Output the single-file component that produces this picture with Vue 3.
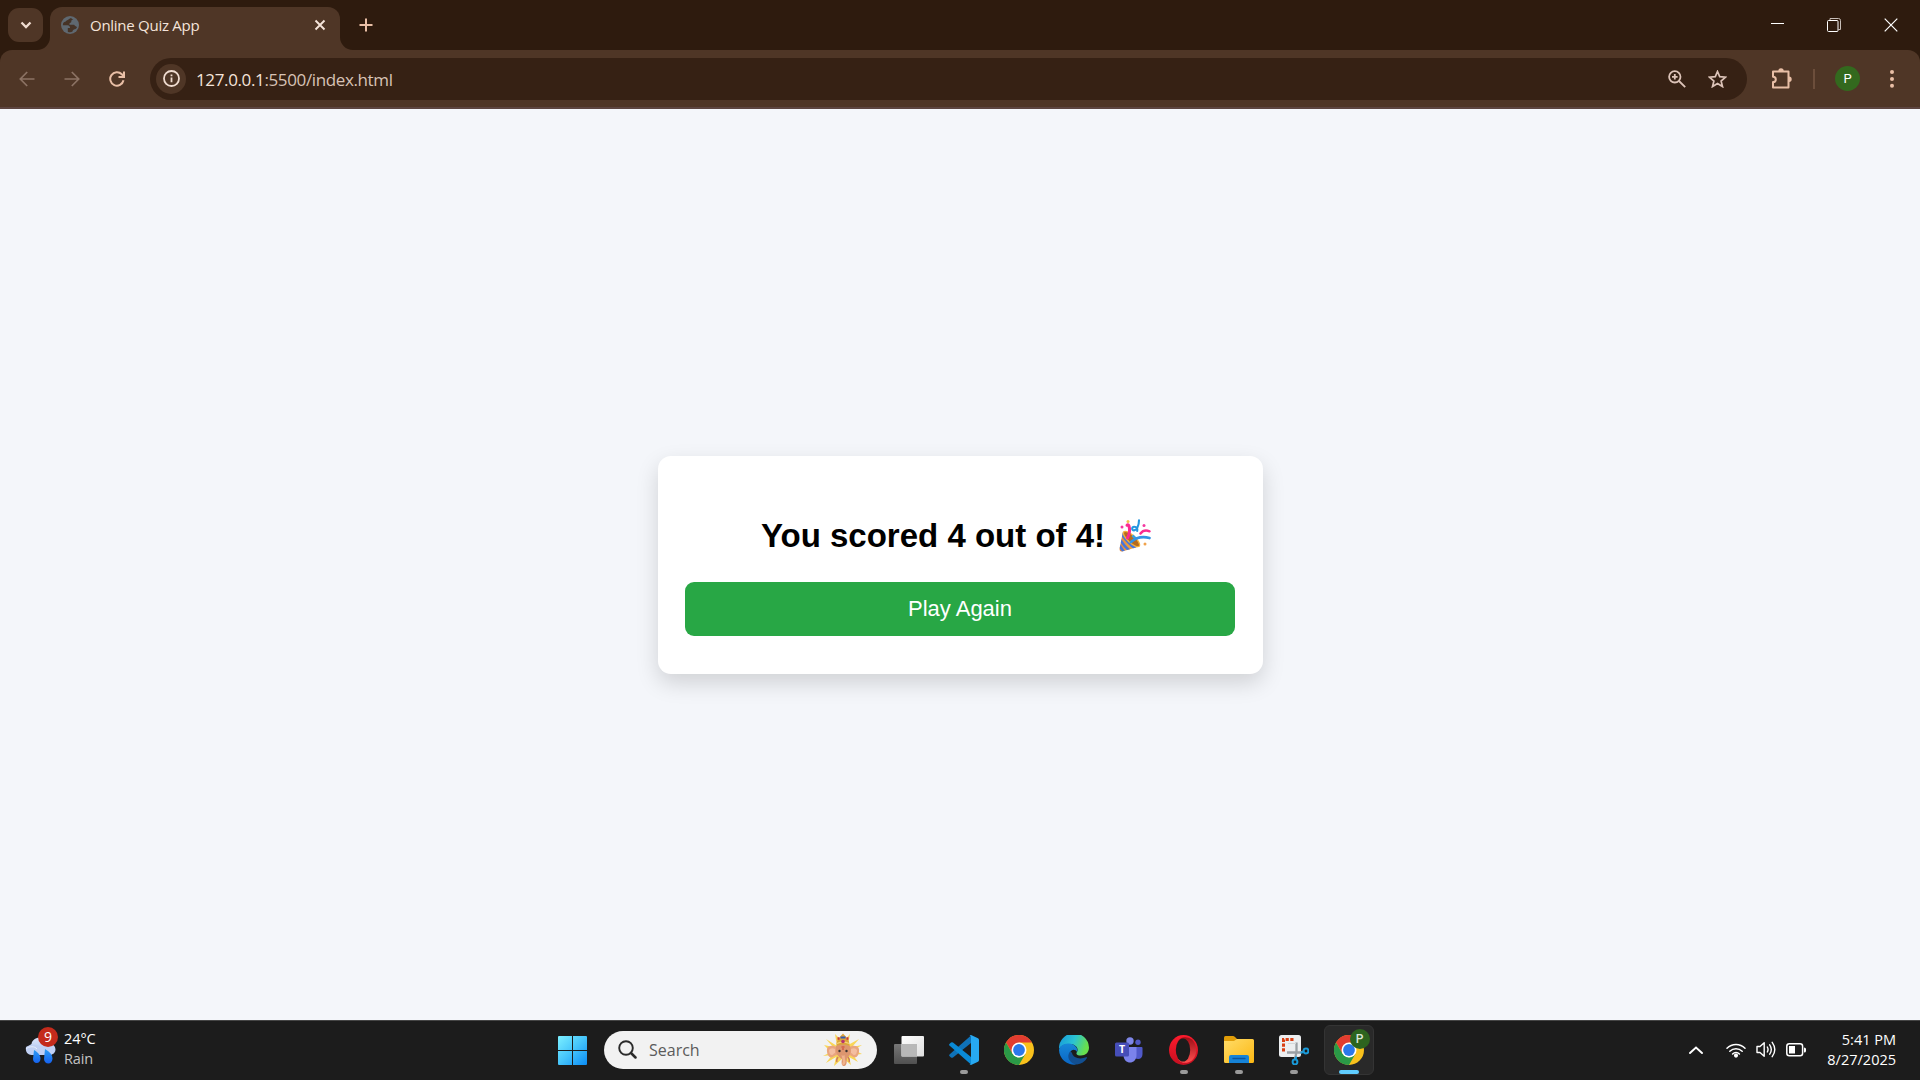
<script setup>
import { ref } from 'vue'

const score = ref(4)
const total = ref(4)
const playAgain = () => { score.value = total.value }
</script>

<template>
  <div class="screen">
    <header class="tabstrip">
      <button class="tab-search" aria-label="Search tabs">
        <svg width="12" height="8" viewBox="0 0 12 8"><path d="M1.500 1.500 6 6l4.500-4.500" fill="none" stroke="#f0dcd0" stroke-width="2.300" /></svg>
      </button>
      <div class="tab">
        <svg class="flare left" width="13" height="13" viewBox="0 0 13 13"><path d="M13 0v13H0A13 13 0 0 0 13 0Z" fill="#4f3626" /></svg>
        <svg class="favicon" width="18" height="18" viewBox="0 0 18 18">
          <circle cx="9" cy="9" r="9" fill="#5f6870" />
          <path d="M10 1.900c-1.800.3-2 1.600-3.300 2.100C5 4.400 4.800 6 3.300 6.100 2.300 6.400 1.800 8 1.900 9.200h4.600c2 0 2.500 1.500 2.500 2.700H6.800v3.800c1.300.7 3.600.8 4.700-.2.3-1.400 1-2 2.200-2.200 1.200-.1 1.900-1 2.300-2.300-1.300-.8-2.100-.8-2.900-2.200H9.300c-1.200 0-1.500-1.500-.2-1.900 1-.2 1.400-.9 1.200-1.800-.2-1 .8-1.300 1.900-1.200Z" fill="#463326" />
        </svg>
        <span class="tab-title">Online Quiz App</span>
        <svg class="tab-close" width="12" height="12" viewBox="0 0 12 12"><path d="m1.500 1.500 9 9m0-9-9 9" stroke="#f5e4da" stroke-width="1.900" /></svg>
        <svg class="flare right" width="13" height="13" viewBox="0 0 13 13"><path d="M0 0v13h13A13 13 0 0 1 0 0Z" fill="#4f3626" /></svg>
      </div>
      <svg class="new-tab" width="14" height="14" viewBox="0 0 14 14"><path d="M7 .5v13M.5 7h13" stroke="#e9bfa6" stroke-width="2" /></svg>
      <div class="window-controls">
        <svg width="13" height="13" viewBox="0 0 13 13"><path d="M0 5.500h13" stroke="#fff" /></svg>
        <svg width="14" height="14" viewBox="0 0 14 14" fill="none" stroke="#fff"><path d="M3 2.500V.5h8.500q2 0 2 2v9h-2" stroke="#c8bfb9" /><rect x=".5" y="2.500" width="10.500" height="11" rx="1" /></svg>
        <svg width="14" height="14" viewBox="0 0 14 14"><path d="m.7.7 12.600 12.600m0-12.600L.7 13.300" stroke="#fff" stroke-width="1.200" /></svg>
      </div>
    </header>

    <nav class="toolbar-wrap">
      <div class="toolbar">
        <div class="nav-icons">
          <svg width="16" height="16" viewBox="0 0 16 16" fill="none" stroke="#8c7364" stroke-width="1.700"><path d="M15.500 8H1.600M8.200 1 1.300 8l6.900 7" /></svg>
          <svg width="16" height="16" viewBox="0 0 16 16" fill="none" stroke="#8c7364" stroke-width="1.700"><path d="M.5 8h13.900M7.800 1l6.900 7-6.900 7" /></svg>
          <svg width="16" height="16" viewBox="0 0 16 16" fill="none" stroke="#e9bfa6" stroke-width="2"><path d="M14.500 9.300A6.700 6.700 0 1 1 12.800 3.300L15 5.600" /><path d="M15 .4v5.500H9.500" /></svg>
        </div>
        <div class="omnibox">
          <span class="site-info">
            <svg width="17" height="17" viewBox="0 0 17 17"><circle cx="8.500" cy="8.500" r="7.500" fill="none" stroke="#f0dcd0" stroke-width="1.800" /><path d="M8.500 7.600v4.700M8.500 4.400v1.900" stroke="#f0dcd0" stroke-width="1.800" /></svg>
          </span>
          <span class="url"><b>127.0.0.1</b>:5500/index.html</span>
          <svg class="magnify" width="18" height="18" viewBox="0 0 18 18" fill="none" stroke="#dcc3b8" stroke-width="1.800"><circle cx="6.800" cy="6.800" r="5.700" /><path d="m11 11 6.200 6.200M6.800 4v5.600M4 6.800h5.600" /></svg>
          <svg class="star" width="19" height="18" viewBox="0 0 19 18" fill="none" stroke="#dcc3b8" stroke-width="1.700"><path d="m9.500 1.500 2.200 5.200 5.800.5-4.400 3.800 1.400 5.600-5-3-5 3 1.400-5.600-4.400-3.800 5.800-.5Z" /></svg>
        </div>
        <svg class="puzzle" width="21" height="21" viewBox="0 0 21 21"><path d="M2 3.500h15.500V19.400H2v-5.300c2 0 2.800-1.200 2.800-2.700S4 8.700 2 8.700Z" fill="none" stroke="#e9bfa6" stroke-width="2" stroke-linejoin="round" /><path d="M7.300 3a2.700 2.700 0 0 1 5.400 0ZM18 8.500a2.700 2.700 0 0 1 0 5.400Z" fill="#e9bfa6" /></svg>
        <span class="divider"></span>
        <span class="avatar">P</span>
        <svg class="dots" width="4" height="18" viewBox="0 0 4 18" fill="#e9bfa6"><circle cx="2" cy="2" r="2" /><circle cx="2" cy="9" r="2" /><circle cx="2" cy="15.800" r="2" /></svg>
      </div>
    </nav>

    <main class="page">
      <section class="card">
        <h2 class="result">
          <span>You scored {{ score }} out of {{ total }}!</span>
          <svg class="popper" width="32" height="33" viewBox="0 0 32 33">
            <defs>
              <linearGradient id="cone" x1="0" x2="1"><stop stop-color="#e58a3c" /><stop offset="1" stop-color="#f2b53c" /></linearGradient>
              <clipPath id="coneClip"><path d="M4 12.500c5 2 13 8.500 16.500 15L3 32.500q-2.500.3-2.500-2.500Z" /></clipPath>
            </defs>
            <path d="M4 12.500c5 2 13 8.500 16.500 15L3 32.500q-2.500.3-2.500-2.500Z" fill="url(#cone)" />
            <g clip-path="url(#coneClip)" stroke="#4775dc" stroke-width="2.700" fill="none"><path d="M2 14c4 6 9 12 15 16M0 19c3 5 7 10 11 13M0 26l5 7" /></g>
            <ellipse cx="12.500" cy="20" rx="3.700" ry="10.500" transform="rotate(-47 12.500 20)" fill="#b56b1e" stroke="#f3b13a" stroke-width="1.300" />
            <path d="M13.500 16.500 17 20" stroke="#39a0dd" stroke-width="2.500" />
            <path d="M8.500 19c2-4 3-7 1.500-12-.5-1.500-1.700-1.500-2-.7" fill="none" stroke="#fb2b91" stroke-width="3" stroke-linecap="round" />
            <path d="M12 23c4-3.500 9-6.500 18.500-4" fill="none" stroke="#3292e5" stroke-width="2.700" stroke-linecap="round" />
            <path d="M21.500 14.500q3.500-4.500 9-2.200" fill="none" stroke="#fb2b91" stroke-width="2.500" stroke-linecap="round" />
            <path d="M20 1.200c0 5-2.200 10-5 10.200-2.600 0-2.300-3.700.2-3.700 2.600 0 3.600 1.600 3 4.200" fill="none" stroke="#2496e0" stroke-width="2.100" stroke-linecap="round" />
            <circle cx="3" cy="8" r="1.500" fill="#f338a0" /><circle cx="25" cy="6.500" r="1.500" fill="#f338a0" /><circle cx="9" cy="2.500" r="1.500" fill="#f0c34b" /><circle cx="26" cy="25" r="1.500" fill="#f0a24b" />
          </svg>
        </h2>
        <button class="play" @click="playAgain">Play Again</button>
      </section>
    </main>

    <footer class="taskbar">
      <div class="weather">
        <svg width="36" height="38" viewBox="0 0 36 38">
          <defs><linearGradient id="cloud" x2="0" y2="1"><stop stop-color="#dce6fb" /><stop offset="1" stop-color="#a9bfee" /></linearGradient><linearGradient id="drop" x2="0" y2="1"><stop stop-color="#2ea0f5" /><stop offset="1" stop-color="#1561f0" /></linearGradient></defs>
          <path d="M7 27a6 6 0 0 1-.5-11C7 12 11 9.500 15 9.500c5 0 8 2 9 6 4 0 6.500 3 6.500 6S28 27 24 27Z" fill="url(#cloud)" />
          <path d="M1 19c5-3 12-3 17 1 4-3 9-3 12 0 0 4-2 7-6 7H7c-4 0-7-3-6-8Z" fill="#c0d0f4" />
          <path d="M9 22c5 3 6.500 6 6.500 8.500S14 35 11.700 35 8 33 8 31ZM20 21c5 3 7.500 6 7.500 9.500 0 3-1.900 5-4.200 5s-4.300-1.800-4.300-4.500Z" fill="url(#drop)" />
          <path d="M1 21c3-3 9-3 11 0" fill="none" stroke="#e6edfc" />
        </svg>
        <span class="badge">9</span>
        <div class="two-line"><span>24°C</span><span class="muted">Rain</span></div>
      </div>

      <div class="apps">
        <svg class="start" width="29" height="29" viewBox="0 0 29 29"><defs><linearGradient id="win" x2="1" y2="1"><stop stop-color="#7cf0ff" /><stop offset=".5" stop-color="#45c4fb" /><stop offset="1" stop-color="#0b8cf5" /></linearGradient></defs><path d="M1 0h13v14H0V1q0-1 1-1Zm14 0h13q1 0 1 1v13H15ZM0 15h14v14H1q-1 0-1-1Zm15 0h14v13q0 1-1 1H15Z" fill="url(#win)" /></svg>
        <div class="search">
          <svg class="glass" width="19" height="19" viewBox="0 0 19 19" fill="none" stroke="#2b2b2b"><circle cx="8" cy="8" r="6.800" stroke-width="1.900" /><path d="m13 13 4.500 4.500" stroke-width="2.500" stroke-linecap="round" /></svg>
          <span class="search-text">Search</span>
          <svg class="ganesha" width="40" height="34" viewBox="0 0 40 34">
            <path d="m1 12 9 2-7-8 11 7L12 1l8 8 7-8-2 11 11-6-7 8 10-2-8 5 8 4-9 1 5 7-9-5 2 8-7-6h-2l-8 7 2-9-10 6 6-8-9 1 8-4Z" fill="#f9d658" />
            <path d="M14 14.500C10 11.500 5 13 4 16c-.5 3.500 1 8.500 4.500 8.500 2 0 3-2.500 5.500-2.500ZM26 14.500c4-3 9-1.500 10 1.500.5 3.500-1 8.500-4.500 8.500-2 0-3-2.500-5.500-2.500Z" fill="#e9a57f" />
            <path d="M12 16q-4-2-6 1c0 3 1 5 3 5 1 0 2-2 3-2ZM28 16q4-2 6 1c0 3-1 5-3 5-1 0-2-2-3-2Z" fill="#f4bea0" />
            <path d="M13 13c4-3 10-3 14 0 1.500 6 0 9.500-3 12-.5 2 .5 7-2.500 8-2.500.5-3.500-2-2.500-7-4-2-7-6-6-13Z" fill="#dd966f" />
            <path d="M18.500 22q1.500 1.500 3 0l1 7q-.5 4-3.500 2.500l1-3Z" fill="#f0b38d" />
            <path d="M15 24q-2 3-1 5M25 24q2 3 1 5" stroke="#cf8059" fill="none" stroke-width="1.500" />
            <path d="M13.500 13C13 7 17 4 20 .500c3 3.500 7 6.500 6.500 12.500-4-2-9-2-13 0Z" fill="#dba43a" />
            <path d="M14.500 5.500h2m7 0h2" stroke="#c8353b" stroke-width="2.500" /><path d="M17.500 4.500h5" stroke="#3158b4" stroke-width="2" /><path d="M14 10.500q6-3 12 0" fill="none" stroke="#f4d376" stroke-width="1.300" />
            <circle cx="20" cy="8.500" r="1.800" fill="#b8336f" /><path d="M18.500 14h3M19 16h2" stroke="#cf3f33" />
            <circle cx="16.500" cy="18" r="1.200" fill="#3d3431" /><circle cx="23.500" cy="18" r="1.200" fill="#3d3431" />
          </svg>
        </div>

        <div class="slot">
          <svg width="30" height="28" viewBox="0 0 30 28"><defs><linearGradient id="tv" x2="1" y2="1"><stop stop-color="#fff" /><stop offset="1" stop-color="#dedede" /></linearGradient><linearGradient id="tvb" x2="0" y2="1"><stop stop-color="#777" /><stop offset="1" stop-color="#505050" /></linearGradient></defs><rect y="8" width="23" height="20" rx="1" fill="url(#tvb)" /><rect x="7.500" width="22.500" height="20.500" rx="1" fill="url(#tv)" /><path d="M7.500 8H23v12.500H7.500Z" fill="#b8b8b8" /></svg>
        </div>
        <div class="slot">
          <svg width="30" height="30" viewBox="0 0 30 30"><path d="M1 19 22 .5V8L4 22.500q-1 .7-2 0L.4 21q-.8-1 .6-2Z" fill="#0f72b8" /><path d="m1 11 21 18.500V22L4 7.500q-1-.7-2 0L.4 9q-.8 1 .6 2Z" fill="#0a8ad6" /><path d="m22 0 7 3.300q1 .5 1 1.700v20q0 1.200-1 1.700L22 30q-1 .2-1.500-.5 1.500.5 1.500-1.500V2q0-2-1.500-1.500Q21-.2 22 0Z" fill="#27a9f2" /></svg>
          <i class="running"></i>
        </div>
        <div class="slot">
          <svg width="30" height="30" viewBox="0 0 30 30"><circle cx="15" cy="15" r="15" fill="#f9c11c" /><path d="M2 7.500A15 15 0 0 1 28 7.500H15L8.500 18.800Z" fill="#e23c30" /><path d="M2 7.500 8.500 18.800 15 22.500 21.500 18.800 15 30A15 15 0 0 1 2 7.500Z" fill="#2a9947" /><circle cx="15" cy="15" r="7.500" fill="#fff" /><circle cx="15" cy="15" r="5.900" fill="#2b78ea" /></svg>
        </div>
        <div class="slot">
          <svg width="30" height="30" viewBox="0 0 30 30"><defs><linearGradient id="e1" x1="0" x2="1" y2=".3"><stop stop-color="#1597dc" /><stop offset=".55" stop-color="#2bc3d2" /><stop offset="1" stop-color="#68df4d" /></linearGradient><linearGradient id="e2" x2="0" y2="1"><stop stop-color="#1787d8" /><stop offset="1" stop-color="#0a66c4" /></linearGradient></defs><path d="M0 14A15 15 0 0 1 30 12.500c0 5-3.500 8-8 8-4 0-5.500-1.500-4-3.500 2-3-1-8-7-8C5.500 9 1.500 11 0 14Z" fill="url(#e1)" /><path d="M0 15c.5-4 5-7 10-6.500 6 .5 9.500 5 8 8.500-1-2-3.500-3-5.500-1.500-3 2.500-2 10 4.500 14A15 15 0 0 1 0 15Z" fill="url(#e2)" /><path d="M11.500 16c-5 5-1 13 6.500 13.500 4-.5 8-3 10-6.500.4-1-.3-1-1-.7-6 2.500-13 .7-14-4.300Z" fill="#124f91" /></svg>
        </div>
        <div class="slot">
          <svg width="28" height="26" viewBox="0 0 28 26"><circle cx="15" cy="4" r="3.700" fill="#7e86e8" /><circle cx="23" cy="5.300" r="2.700" fill="#5159c5" /><path d="M18 10h8.500q1 0 1 1v6c0 5-4 6-8 4Z" fill="#5059c9" /><path d="M10 10h11.500v8c0 10-13 10-13 0Z" fill="#7b83eb" /><rect y="5.500" width="14" height="14" rx="1.500" fill="#464eb8" /><text x="7" y="16.300" text-anchor="middle" font-family="Open Sans, sans-serif" font-size="10.500" font-weight="700" fill="#fff">T</text></svg>
        </div>
        <div class="slot">
          <svg width="29" height="30" viewBox="0 0 29 30"><defs><linearGradient id="o1" x2="0" y2="1"><stop stop-color="#ff1b2d" /><stop offset="1" stop-color="#c40f20" /></linearGradient><linearGradient id="o2" x2="0" y2="1"><stop stop-color="#9c0d16" /><stop offset="1" stop-color="#ff5050" /></linearGradient></defs><ellipse cx="14.500" cy="15" rx="14.500" ry="15" fill="url(#o1)" /><path d="M9.500 5.500C12 1.500 18 1 23 4.500a15 15 0 0 1 0 21C18 29 12 28.500 9.500 24.500Z" fill="url(#o2)" /><ellipse cx="14" cy="15" rx="7.200" ry="11.500" fill="#1c1c1c" /></svg>
          <i class="running"></i>
        </div>
        <div class="slot">
          <svg width="30" height="27" viewBox="0 0 30 27"><defs><linearGradient id="fo" x2="1" y2="1"><stop stop-color="#ffdc68" /><stop offset="1" stop-color="#fcb813" /></linearGradient></defs><path d="M0 1.500Q0 0 1.500 0H9q1 0 2 1l2 2v5H0Z" fill="#e19d08" /><path d="M0 5h10l3-2h15.500Q30 3 30 4.500v21q0 1.500-1.500 1.500h-27Q0 27 0 25.500Z" fill="url(#fo)" /><path d="M5 27v-6q0-2 2-2h16q2 0 2 2v6Z" fill="#1683d7" /><path d="M9 22.500h12" stroke="#0c549e" stroke-width="1.300" stroke-linecap="round" /></svg>
          <i class="running"></i>
        </div>
        <div class="slot">
          <svg width="30" height="30" viewBox="0 0 30 30"><rect width="22" height="22" rx="2.500" fill="#eceef0" /><path d="M4.500 16.500V4.500H16" fill="none" stroke="#d93f12" stroke-width="3" stroke-dasharray="3.200 1.500" /><path d="M17.500 7.500V17l-1.500 7M8 17.500h13l3.500-1" fill="none" stroke="#9aa0a5" stroke-width="2.300" /><path d="M9 8.500h8" stroke="#d4d7da" /><g fill="none" stroke="#199ad9" stroke-width="2"><circle cx="27" cy="16" r="2.400" /><circle cx="16" cy="27" r="2.400" /><path d="m24.500 17-3 .8M16.500 24.500l.8-3" /></g></svg>
          <i class="running"></i>
        </div>
        <div class="slot">
          <div class="active-app">
            <svg width="30" height="30" viewBox="0 0 30 30"><circle cx="15" cy="15" r="15" fill="#f9c11c" /><path d="M2 7.500A15 15 0 0 1 28 7.500H15L8.500 18.800Z" fill="#e23c30" /><path d="M2 7.500 8.500 18.800 15 22.500 21.500 18.800 15 30A15 15 0 0 1 2 7.500Z" fill="#2a9947" /><circle cx="15" cy="15" r="7.500" fill="#fff" /><circle cx="15" cy="15" r="5.900" fill="#2b78ea" /></svg>
            <span class="profile">P</span>
          </div>
          <i class="running current"></i>
        </div>
      </div>

      <div class="tray">
        <svg class="up" width="14" height="8" viewBox="0 0 14 8"><path d="m1 7 6-5.500L13 7" fill="none" stroke="#fff" stroke-width="1.900" stroke-linecap="round" /></svg>
        <svg class="wifi" width="20" height="16" viewBox="0 0 20 16" fill="none" stroke="#fff" stroke-width="1.500" stroke-linecap="round"><path d="M1 6.200a12.700 12.700 0 0 1 18 0M3.800 9.200a8.800 8.800 0 0 1 12.400 0M6.600 12a4.800 4.800 0 0 1 6.800 0" /><circle cx="10" cy="13.600" r="1.300" fill="#fff" /></svg>
        <svg class="volume" width="20" height="17" viewBox="0 0 20 17" fill="none" stroke="#fff" stroke-width="1.400" stroke-linecap="round" stroke-linejoin="round"><path d="M1 5.500h3l4.200-3.800v13.600L4 11.500H1ZM11.300 6q1.500 2.500 0 5M13.700 3.800q3.200 4.700 0 9.400M16.200 1.300q5.200 7.200 0 14.400" /></svg>
        <svg class="battery" width="20" height="14" viewBox="0 0 20 14"><rect x=".8" y=".8" width="15.800" height="12" rx="2.500" fill="none" stroke="#fff" stroke-width="1.500" /><path d="M3 3h6v7.500H3Z" fill="#fff" /><path d="M18 4.500q2 0 2 1.500v2q0 1.500-2 1.500Z" fill="#fff" /></svg>
        <div class="two-line clock"><span>5:41 PM</span><span class="date">8/27/2025</span></div>
      </div>
    </footer>
  </div>
</template>

<style>
body { margin: 0; overflow: hidden; }
</style>

<style scoped>
* { box-sizing: border-box; }
svg { display: block; flex: none; }
.screen { width: 1920px; height: 1080px; display: flex; flex-direction: column; font-family: "Open Sans", "Noto Sans", sans-serif; background: #f4f6fa; }

.tabstrip { height: 50px; flex: none; background: #2e1b0e; display: flex; padding-left: 8px; }
.tab-search { width: 35px; height: 34px; margin: 8px 7px 0 0; padding: 0; border: 0; border-radius: 11px; background: #4f3626; display: flex; align-items: center; justify-content: center; }
.tab { position: relative; width: 290px; height: 43px; margin-top: 7px; border-radius: 12px 12px 0 0; background: #4f3626; display: flex; align-items: center; padding: 0 14px 7px 11px; }
.flare { position: absolute; bottom: 0; }
.left { left: -13px; }
.right { right: -13px; }
.tab-title { margin-left: 11px; flex: 1; color: #f5e4da; font-size: 15px; letter-spacing: -0.27px; white-space: nowrap; }
.new-tab { margin: 18px 0 0 19px; }
.window-controls { margin-left: auto; display: flex; gap: 43px; padding: 18px 22px 0 0; }

.toolbar-wrap { height: 59px; flex: none; background: #2e1b0e; }
.toolbar { height: 59px; background: #4f3626; border-radius: 12px 12px 0 0; border-bottom: 2px solid #5d4540; display: flex; align-items: center; padding: 0 26px 0 19px; }
.nav-icons { display: flex; gap: 29px; width: 131px; }
.omnibox { width: 1597px; height: 42px; border-radius: 21px; background: #362114; display: flex; align-items: center; padding: 0 20px 0 6px; }
.site-info { width: 30px; height: 30px; border-radius: 15px; background: #4f3626; display: flex; align-items: center; justify-content: center; }
.url { margin-left: 10px; padding-top: 1px; font-size: 17px; letter-spacing: -0.37px; color: #d8c3b6; flex: 1; white-space: nowrap; }
.url b { font-weight: 400; color: #f5e4da; }
.magnify { margin-right: 22px; }
.puzzle { margin-left: 24px; }
.divider { width: 2px; height: 20px; background: #6c4e3b; margin: 0 20px 0 21px; }
.avatar { width: 25px; height: 25px; border-radius: 50%; background: #33691e; color: #fff; font: 13px/25px Roboto, sans-serif; text-align: center; }
.dots { margin-left: 30px; }

.page { flex: 1; background: #f4f6fa; display: flex; align-items: center; justify-content: center; font-family: "Liberation Sans", Arial, sans-serif; }
.card { width: 605px; height: 218px; padding: 0 27px 0 27px; background: #fff; border-radius: 13px; box-shadow: 0 9px 22px rgba(0, 0, 0, 0.15); }
.result { height: 44px; margin: 58px 0 24px; display: flex; align-items: center; justify-content: center; font-size: 33px; line-height: 44px; color: #000; white-space: nowrap; }
.popper { margin: 0 8px 1px 14px; }
.play { display: block; width: 550px; height: 54px; padding: 0 0 0 1px; border: 0; border-radius: 9px; background: #28a745; color: #fff; font: 22px "Liberation Sans", Arial, sans-serif; }

.taskbar { height: 60px; flex: none; background: #1c1c1c; border-top: 1px solid #454545; display: flex; color: #fff; font-size: 14px; }
.weather { position: relative; width: 557px; display: flex; padding: 7px 0 0 25px; }
.badge { position: absolute; left: 38px; top: 6px; width: 20px; height: 20px; border-radius: 50%; background: #c42b1c; font-size: 14px; line-height: 20px; text-align: center; }
.two-line { display: flex; flex-direction: column; line-height: 20px; font-size: 14.5px; }
.weather .two-line { margin: 1px 0 0 3px; letter-spacing: -0.1px; }
.muted { color: #c4c4c4; }
.apps { display: flex; align-items: center; height: 57px; }
.start { margin: 1px 17px 0 1px; }
.search { width: 273px; height: 38px; border-radius: 19px; background: #f2f2f2; display: flex; align-items: center; padding: 0 14px 0 14px; margin-right: 4px; }
.search-text { margin-left: 12px; color: #5b5b5b; font-size: 16px; flex: 1; }
.slot { position: relative; width: 55px; height: 57px; display: flex; align-items: center; justify-content: center; }
.running { position: absolute; left: 24px; bottom: 4px; width: 8px; height: 4px; border-radius: 2px; background: #9a9a9a; }
.current { left: 18px; width: 20px; background: #60cdff; }
.active-app { position: relative; width: 50px; height: 50px; border: 1px solid #343434; border-radius: 6px; background: #292929; display: flex; align-items: center; justify-content: center; }
.profile { position: absolute; left: 25px; top: 3px; width: 20px; height: 20px; border-radius: 50%; background: #2d641f; color: #dbe6d7; font: 500 12px/20px Roboto, sans-serif; text-align: center; }
.tray { margin-left: auto; display: flex; align-items: center; height: 57px; padding-right: 24px; }
.wifi { margin-left: 23px; }
.volume { margin-left: 10px; }
.battery { margin-left: 10px; }
.clock { width: 90px; text-align: right; }
</style>
